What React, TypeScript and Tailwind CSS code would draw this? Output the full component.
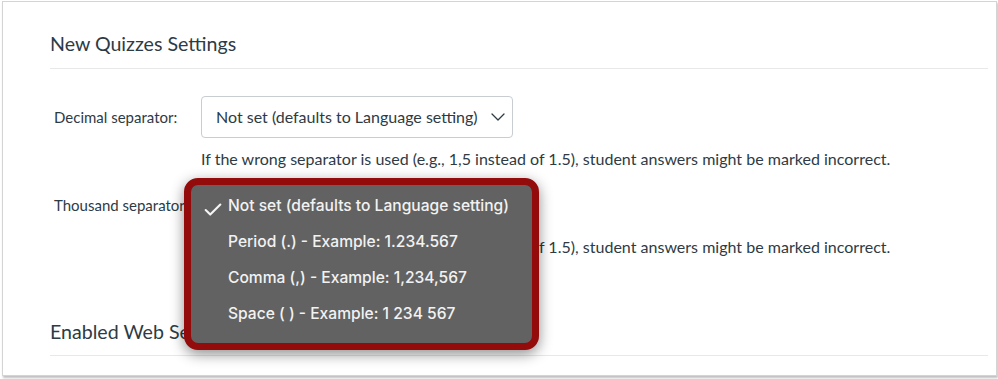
import { Check, ChevronDown } from 'lucide-react';

const HELP = 'If the wrong separator is used (e.g., 1,5 instead of 1.5), student answers might be marked incorrect.';
const OPTIONS = [
  'Not set (defaults to Language setting)',
  'Period (.) - Example: 1.234.567',
  'Comma (,) - Example: 1,234,567',
  'Space ( ) - Example: 1 234 567',
];

function Select({ children }: { children?: React.ReactNode }) {
  return (
    <div className="relative h-[42px] w-[312px] shrink-0">
      <div className="flex h-full items-center justify-between rounded-[4px] border border-[#c7cdd1] bg-white pr-[2px] pl-[14px] text-[16px] text-[#2d3b45]">
        <span>Not set (defaults to Language setting)</span>
        <ChevronDown size={24} strokeWidth={1.3} className="text-[#2d3b45]" />
      </div>
      {children}
    </div>
  );
}

function Row({ label, menu }: { label: string; menu?: boolean }) {
  return (
    <div className="flex flex-col">
      <div className="flex items-center">
        <div className="w-[151px] shrink-0 pl-[4px] text-[15px] text-[#2d3b45]">{label}</div>
        <Select>{menu && <Menu />}</Select>
      </div>
      <p className="mt-[9px] ml-[151px] text-[16.05px] leading-[24px] text-[#2d3b45]">{HELP}</p>
    </div>
  );
}

/** Native select popup, outlined in red for the guide. */
function Menu() {
  return (
    <div className="absolute top-[-6px] left-[-17px] z-10 h-[172px] w-[355px] rounded-[14px] border-[7px] border-[#930b0b] bg-[#626262] shadow-[0_4px_14px_rgba(0,0,0,0.45)]">
      <ul className="pt-[3px] font-['Inter',sans-serif] text-[15.6px] font-medium text-[#f2f2f2]">
        {OPTIONS.map((o, i) => (
          <li key={o} className="relative flex h-[36px] items-center pl-[37px]">
            {i === 0 && <Check size={22} strokeWidth={2.3} className="absolute top-[11px] left-[11px] text-[#f4f4f4]" />}
            {o}
          </li>
        ))}
      </ul>
    </div>
  );
}

export default function App() {
  return (
    <div className="h-[379px] w-[998px] bg-white pt-[1px] pl-[2px] font-['Lato','Open_Sans',sans-serif]">
      <div className="h-[375px] w-[995px] overflow-hidden border border-[#d4d4d4] bg-white pr-[8px] pl-[47px] shadow-[1px_2px_2px_rgba(0,0,0,0.25)]">
        <h2 className="border-b border-[#e6e8ea] pt-[29px] pb-[11px] text-[19.6px] leading-[26px] text-[#2d3b45]">New Quizzes Settings</h2>
        <div className="mt-[27px] flex flex-col gap-[13px]">
          <Row label="Decimal separator:" />
          <Row label="Thousand separator:" menu />
        </div>
        <h2 className="mt-[60px] border-b border-[#e6e8ea] pb-[10px] text-[19.6px] leading-[26px] text-[#2d3b45]">Enabled Web Services</h2>
      </div>
    </div>
  );
}
